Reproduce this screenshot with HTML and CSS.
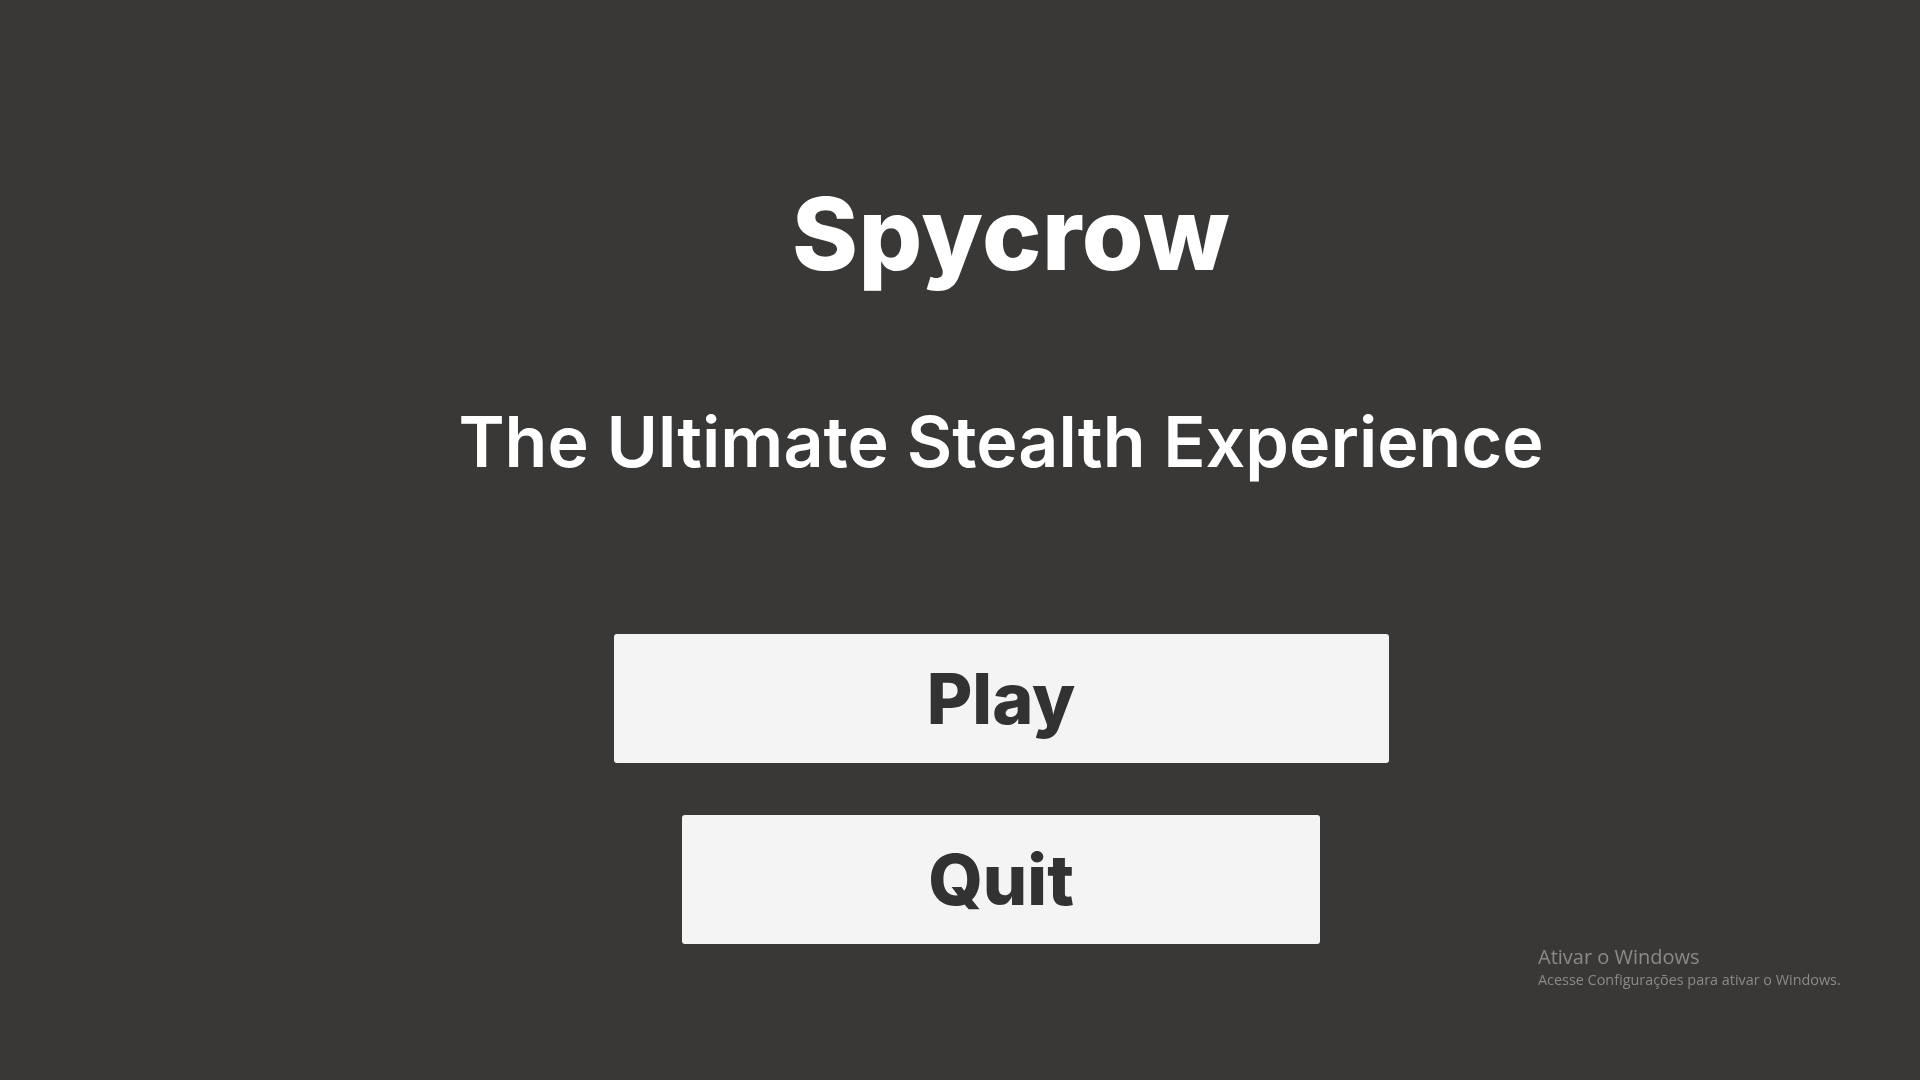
FILE: index.html
```html
<!DOCTYPE html>
<html lang="en">
<head>
<meta charset="utf-8">
<title>Spycrow</title>
<link rel="stylesheet" href="styles.css">
</head>
<body>
<main class="menu">
  <h1 class="title">Spycrow</h1>
  <h2 class="subtitle">The Ultimate Stealth Experience</h2>
  <div class="buttons">
    <button class="btn btn-play">Play</button>
    <button class="btn btn-quit">Quit</button>
  </div>
</main>
<div class="watermark">
  <div class="wm-title">Ativar o Windows</div>
  <div class="wm-sub">Acesse Configurações para ativar o Windows.</div>
</div>
</body>
</html>
```
FILE: styles.css
```css
html, body {
  margin: 0;
  padding: 0;
  width: 1920px;
  height: 1080px;
  overflow: hidden;
  background: #393836;
}
.menu {
  box-sizing: border-box;
  width: 1920px;
  height: 1080px;
  padding: 174px 0 0 82px;
  display: flex;
  flex-direction: column;
  align-items: center;
  font-family: "Inter", "Roboto", sans-serif;
}
.title {
  margin: 0 0 0 20px;
  color: #ffffff;
  font-size: 100px;
  font-weight: 800;
  line-height: 120px;
  letter-spacing: 0.6px;
}
.subtitle {
  margin: 106px 0 0;
  color: #ffffff;
  font-size: 70px;
  font-weight: 600;
  line-height: 84px;
}
.buttons {
  margin-top: 150px;
  display: flex;
  flex-direction: column;
  align-items: center;
  gap: 52px;
}
.btn {
  border: none;
  border-radius: 3px;
  background: #f4f4f4;
  color: #323232;
  font-family: "Inter", "Roboto", sans-serif;
  font-size: 70px;
  font-weight: 800;
  height: 129px;
  padding: 0;
  cursor: pointer;
}
.btn-play { width: 775px; }
.btn-quit { width: 638px; }
.watermark {
  position: fixed;
  left: 1538px;
  top: 944px;
  font-family: "Open Sans", "Noto Sans", sans-serif;
  color: #8b8a88;
}
.wm-title {
  font-size: 20px;
  line-height: 26px;
}
.wm-sub {
  font-size: 14.4px;
  line-height: 20px;
}
```
